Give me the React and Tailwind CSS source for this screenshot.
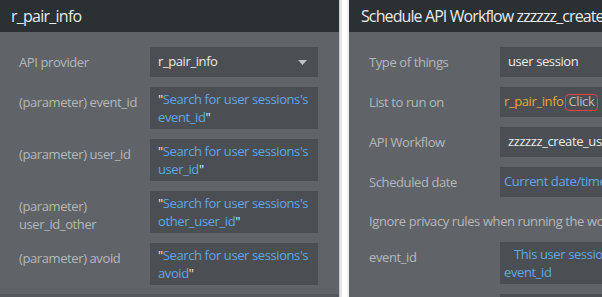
import React from "react";

const font = { fontFamily: '"Open Sans", "Noto Sans", sans-serif' };

function Label({ children, single }) {
  return (
    <div
      className={
        "w-[131px] shrink-0 text-[13px] tracking-[-0.4px] leading-[18px] text-[#b3b7ba] whitespace-nowrap " +
        (single ? "h-[30px] flex items-center" : "pt-[6px]")
      }
    >
      {children}
    </div>
  );
}

function Blue({ a, b }) {
  return (
    <div className="bg-[#4b4f53] px-[8px] py-[3px] text-[13px] tracking-[-0.4px] leading-[18px] text-[#e6e8e9] whitespace-nowrap">
      "<span className="text-[#5ea6e8]">{a}</span>
      <br />
      <span className="text-[#5ea6e8]">{b}</span>"
    </div>
  );
}

const box = "shrink-0 h-[30px] bg-[#4b4f53] flex items-center text-[13px] tracking-[-0.4px]";

export default function App() {
  return (
    <div style={font} className="w-[602px] h-[297px] flex overflow-hidden bg-white">
      {/* Left panel */}
      <div className="w-[339px] shrink-0 h-full flex flex-col bg-[#606468] border-b-[3px] border-[#55595d]">
        <div className="h-[32px] shrink-0 bg-[#2b3033] flex items-center pl-[11px] text-[16px] tracking-[-0.75px] text-[#e8e9ea]">
          r_pair_info
        </div>
        <div className="flex flex-col gap-[10px] pt-[15px] pl-[19px]">
          <div className="flex">
            <Label single>API provider</Label>
            <div className={"w-[168px] justify-between pl-[8px] pr-[11px] text-[#e8e9ea] " + box}>
              <span>r_pair_info</span>
              <svg width="9" height="5" viewBox="0 0 9 5">
                <path d="M0 0 L9 0 L4.5 5 Z" fill="#bfc2c4" />
              </svg>
            </div>
          </div>
          <div className="flex">
            <Label>(parameter) event_id</Label>
            <div className="w-[168px]">
              <Blue a="Search for user sessions's" b="event_id" />
            </div>
          </div>
          <div className="flex">
            <Label>(parameter) user_id</Label>
            <div className="w-[168px]">
              <Blue a="Search for user sessions's" b="user_id" />
            </div>
          </div>
          <div className="flex">
            <Label>
              (parameter)
              <br />
              user_id_other
            </Label>
            <div className="w-[168px]">
              <Blue a="Search for user sessions's" b="other_user_id" />
            </div>
          </div>
          <div className="flex">
            <Label>(parameter) avoid</Label>
            <div className="w-[168px]">
              <Blue a="Search for user sessions's" b="avoid" />
            </div>
          </div>
        </div>
      </div>

      {/* Divider */}
      <div className="w-[10px] shrink-0 h-full flex">
        <div className="w-[1px] bg-[#c9cccf]" />
        <div className="w-[2px] bg-[#e3e5e7]" />
        <div className="flex-1 bg-[#ffffff]" />
        <div className="w-[2px] bg-[#eceeef]" />
      </div>

      {/* Right panel */}
      <div className="flex-1 min-w-0 h-full flex flex-col bg-[#606468] overflow-hidden">
        <div className="h-[32px] shrink-0 bg-[#2b3033] flex items-center pl-[12px] text-[16px] tracking-[-0.9px] text-[#e8e9ea] whitespace-nowrap">
          Schedule API Workflow zzzzzz_create_user_session
        </div>
        <div className="shrink-0 flex flex-col gap-[10px] pt-[15px] pl-[20px] whitespace-nowrap">
          <div className="flex">
            <Label single>Type of things</Label>
            <div className={"w-[300px] pl-[8px] text-[#e8e9ea] " + box}>user session</div>
          </div>
          <div className="flex">
            <Label single>List to run on</Label>
            <div className={"w-[300px] pl-[4px] " + box}>
              <span className="text-[#e5a33b]">r_pair_info</span>
              <span className="ml-[1px] h-[17px] px-[3px] flex items-center rounded-[4px] border border-[#e0463f] text-[#b9bcbf]">
                Click
              </span>
            </div>
          </div>
          <div className="flex">
            <Label single>API Workflow</Label>
            <div className={"w-[300px] pl-[8px] text-[#e8e9ea] " + box}>zzzzzz_create_user_session</div>
          </div>
          <div className="flex">
            <Label single>Scheduled date</Label>
            <div className={"w-[300px] pl-[4px] text-[#5ea6e8] " + box}>Current date/time</div>
          </div>
          <div className="h-[30px] -mb-[5px] flex items-center text-[13px] tracking-[-0.4px] text-[#b3b7ba]">
            Ignore privacy rules when running the workflow
          </div>
          <div className="flex">
            <Label>event_id</Label>
            <div className="w-[300px] shrink-0 bg-[#4b4f53] pl-[4px] py-[3px] text-[13px] tracking-[-0.4px] leading-[18px] text-[#5ea6e8]">
              <span className="pl-[10px]">This user session's</span>
              <br />
              event_id
            </div>
          </div>
          <div className="flex">
            <Label>user_id</Label>
            <div className="w-[300px] shrink-0 h-[42px] bg-[#4b4f53]" />
          </div>
        </div>
      </div>
    </div>
  );
}
